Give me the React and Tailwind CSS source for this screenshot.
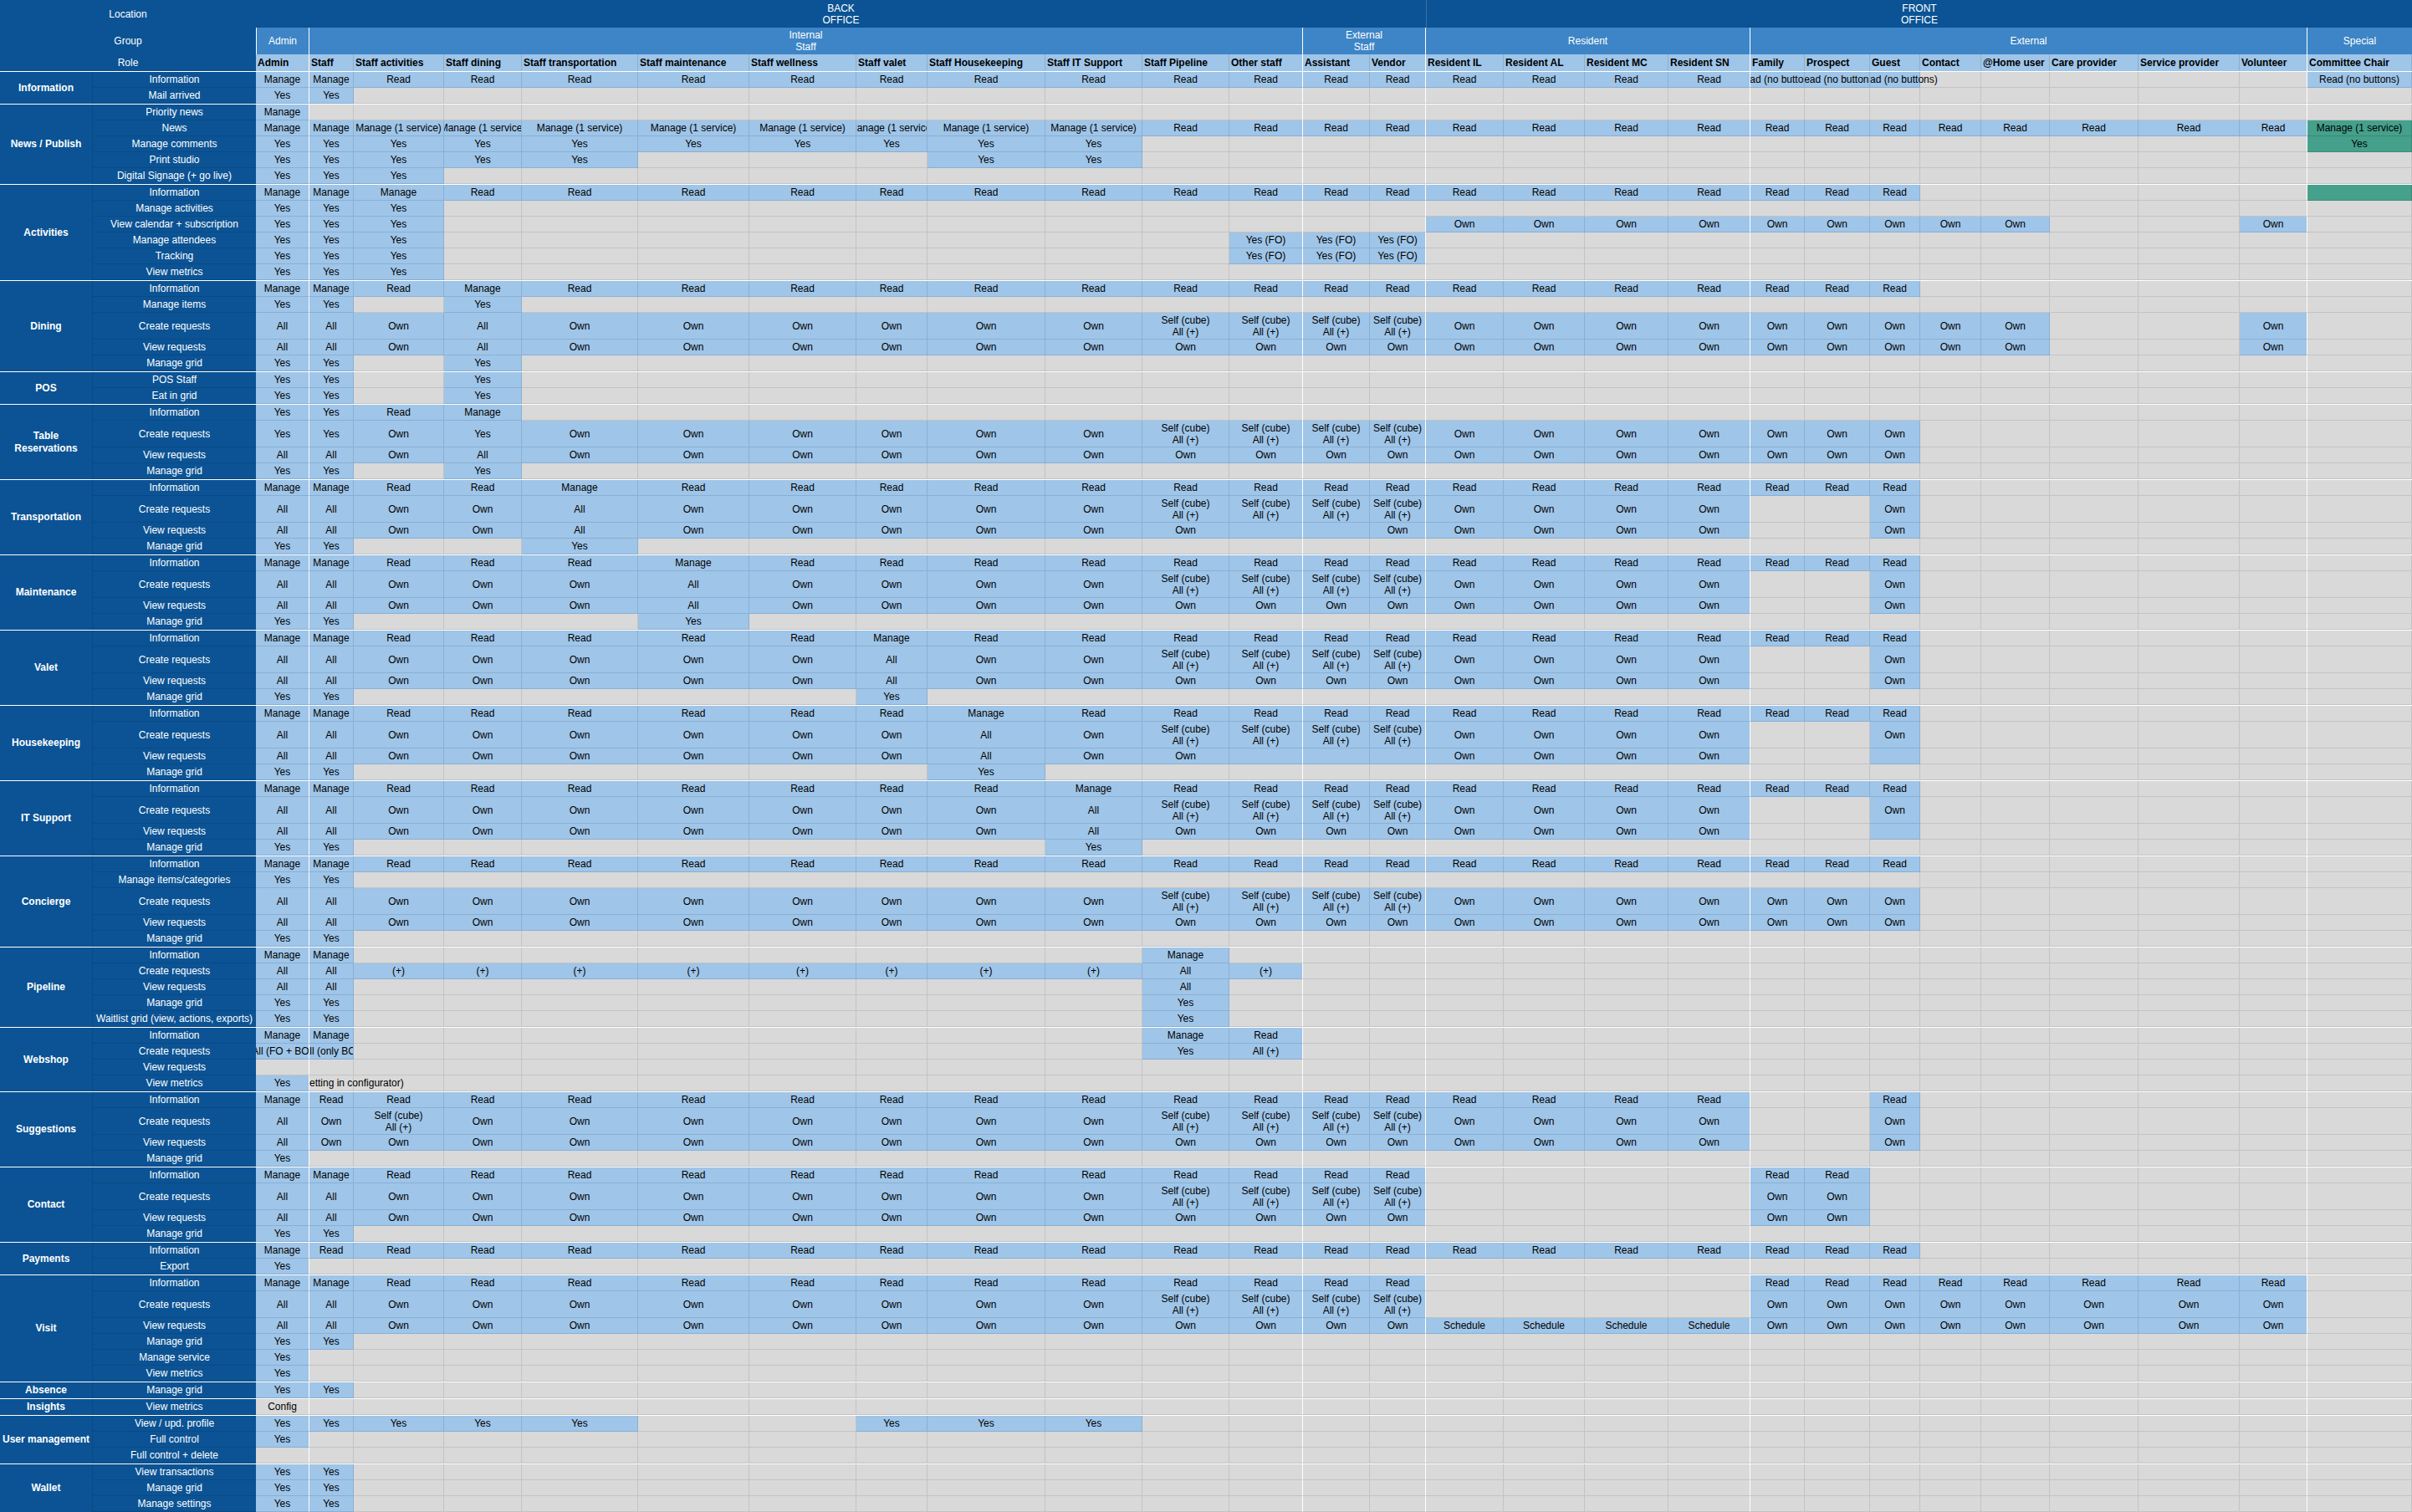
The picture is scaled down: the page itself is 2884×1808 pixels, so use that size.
import React from "react";

const W = ['w-[64px]','w-[53px]','w-[108px]','w-[93px]','w-[139px]','w-[133px]','w-[128px]','w-[85px]','w-[141px]','w-[116px]','w-[104px]','w-[88px]','w-[80px]','w-[67px]','w-[93px]','w-[97px]','w-[100px]','w-[98px]','w-[65px]','w-[78px]','w-[60px]','w-[73px]','w-[82px]','w-[106px]','w-[121px]','w-[81px]','w-[125px]'];
const BOUND = new Set([0, 11, 13, 17, 25]);
const ROLES = ['Admin','Staff','Staff activities','Staff dining','Staff transportation','Staff maintenance','Staff wellness','Staff valet','Staff Housekeeping','Staff IT Support','Staff Pipeline','Other staff','Assistant','Vendor','Resident IL','Resident AL','Resident MC','Resident SN','Family','Prospect','Guest','Contact','@Home user','Care provider','Service provider','Volunteer','Committee Chair'];

const rep = (v, n) => Array(n).fill(v);
const R = 'Read', O = 'Own', Y = 'Yes', M = 'Manage', A = 'All', S = 'Self (cube)\nAll (+)', M1 = 'Manage (1 service)', RNB = 'Read (no buttons)', FO = 'Yes (FO)';

const r = (label, cells, tall = false) => ({ label, cells, tall });

const SECTIONS = [
  ['Information', [
    r('Information', [M, M, ...rep(R, 16), RNB, RNB, 'OVR:ad (no buttons)', '', '', '', '', '', RNB]),
    r('Mail arrived', [Y, Y]),
  ]],
  ['News / Publish', [
    r('Priority news', [M]),
    r('News', [M, M, ...rep(M1, 8), ...rep(R, 16), 'T:Manage (1 service)']),
    r('Manage comments', [Y, Y, ...rep(Y, 8), ...rep('', 16), 'T:Yes']),
    r('Print studio', [Y, Y, Y, Y, Y, '', '', '', Y, Y]),
    r('Digital Signage (+ go live)', [Y, Y, Y]),
  ]],
  ['Activities', [
    r('Information', [M, M, M, ...rep(R, 15), R, R, R, '', '', '', '', '', 'T:']),
    r('Manage activities', [Y, Y, Y]),
    r('View calendar + subscription', [Y, Y, Y, ...rep('', 11), ...rep(O, 4), O, O, O, O, O, '', '', O]),
    r('Manage attendees', [Y, Y, Y, ...rep('', 8), FO, FO, FO]),
    r('Tracking', [Y, Y, Y, ...rep('', 8), FO, FO, FO]),
    r('View metrics', [Y, Y, Y]),
  ]],
  ['Dining', [
    r('Information', [M, M, R, M, ...rep(R, 14), R, R, R]),
    r('Manage items', [Y, Y, '', Y]),
    r('Create requests', [A, A, O, A, ...rep(O, 6), ...rep(S, 4), ...rep(O, 4), O, O, O, O, O, '', '', O], true),
    r('View requests', [A, A, O, A, ...rep(O, 14), O, O, O, O, O, '', '', O]),
    r('Manage grid', [Y, Y, '', Y]),
  ]],
  ['POS', [
    r('POS Staff', [Y, Y, '', Y]),
    r('Eat in grid', [Y, Y, '', Y]),
  ]],
  ['Table\nReservations', [
    r('Information', [Y, Y, R, M]),
    r('Create requests', [Y, Y, O, Y, ...rep(O, 6), ...rep(S, 4), ...rep(O, 4), O, O, O], true),
    r('View requests', [A, A, O, A, ...rep(O, 14), O, O, O]),
    r('Manage grid', [Y, Y, '', Y]),
  ]],
  ['Transportation', [
    r('Information', [M, M, R, R, M, ...rep(R, 13), R, R, R]),
    r('Create requests', [A, A, O, O, A, ...rep(O, 5), ...rep(S, 4), ...rep(O, 4), '', '', O], true),
    r('View requests', [A, A, O, O, A, ...rep(O, 5), O, '_', '_', O, ...rep(O, 4), '', '', O]),
    r('Manage grid', [Y, Y, '', '', Y]),
  ]],
  ['Maintenance', [
    r('Information', [M, M, R, R, R, M, ...rep(R, 12), R, R, R]),
    r('Create requests', [A, A, O, O, O, A, ...rep(O, 4), ...rep(S, 4), ...rep(O, 4), '', '', O], true),
    r('View requests', [A, A, O, O, O, A, ...rep(O, 12), '', '', O]),
    r('Manage grid', [Y, Y, '', '', '', Y]),
  ]],
  ['Valet', [
    r('Information', [M, M, R, R, R, R, R, M, ...rep(R, 10), R, R, R]),
    r('Create requests', [A, A, O, O, O, O, O, A, O, O, ...rep(S, 4), ...rep(O, 4), '', '', O], true),
    r('View requests', [A, A, O, O, O, O, O, A, ...rep(O, 10), '', '', O]),
    r('Manage grid', [Y, Y, '', '', '', '', '', Y]),
  ]],
  ['Housekeeping', [
    r('Information', [M, M, ...rep(R, 6), M, ...rep(R, 9), R, R, R]),
    r('Create requests', [A, A, ...rep(O, 6), A, O, ...rep(S, 4), ...rep(O, 4), '', '', O], true),
    r('View requests', [A, A, ...rep(O, 6), A, O, O, '_', '_', '_', ...rep(O, 4), '', '', '_']),
    r('Manage grid', [Y, Y, ...rep('', 6), Y]),
  ]],
  ['IT Support', [
    r('Information', [M, M, ...rep(R, 7), M, ...rep(R, 8), R, R, R]),
    r('Create requests', [A, A, ...rep(O, 7), A, ...rep(S, 4), ...rep(O, 4), '', '', O], true),
    r('View requests', [A, A, ...rep(O, 7), A, ...rep(O, 8), '', '', '_']),
    r('Manage grid', [Y, Y, ...rep('', 7), Y]),
  ]],
  ['Concierge', [
    r('Information', [M, M, ...rep(R, 16), R, R, R]),
    r('Manage items/categories', [Y, Y]),
    r('Create requests', [A, A, ...rep(O, 8), ...rep(S, 4), ...rep(O, 4), O, O, O], true),
    r('View requests', [A, A, ...rep(O, 16), O, O, O]),
    r('Manage grid', [Y, Y]),
  ]],
  ['Pipeline', [
    r('Information', [M, M, ...rep('', 8), M]),
    r('Create requests', [A, A, ...rep('(+)', 8), A, '(+)']),
    r('View requests', [A, A, ...rep('', 8), A]),
    r('Manage grid', [Y, Y, ...rep('', 8), Y]),
    r('Waitlist grid (view, actions, exports)', [Y, Y, ...rep('', 8), Y]),
  ]],
  ['Webshop', [
    r('Information', [M, M, ...rep('', 8), M, R]),
    r('Create requests', ['All (FO + BO)', 'All (only BO)', ...rep('', 8), Y, 'All (+)']),
    r('View requests', []),
    r('View metrics', [Y, 'OVF:etting in configurator)']),
  ]],
  ['Suggestions', [
    r('Information', [M, R, ...rep(R, 16), '', '', R]),
    r('Create requests', [A, O, S, ...rep(O, 7), ...rep(S, 4), ...rep(O, 4), '', '', O], true),
    r('View requests', [A, O, ...rep(O, 16), '', '', O]),
    r('Manage grid', [Y]),
  ]],
  ['Contact', [
    r('Information', [M, M, ...rep(R, 12), '', '', '', '', R, R]),
    r('Create requests', [A, A, ...rep(O, 8), ...rep(S, 4), '', '', '', '', O, O], true),
    r('View requests', [A, A, ...rep(O, 12), '', '', '', '', O, O]),
    r('Manage grid', [Y, Y]),
  ]],
  ['Payments', [
    r('Information', [M, R, ...rep(R, 16), R, R, R]),
    r('Export', [Y]),
  ]],
  ['Visit', [
    r('Information', [M, M, ...rep(R, 12), '', '', '', '', ...rep(R, 8)]),
    r('Create requests', [A, A, ...rep(O, 8), ...rep(S, 4), '', '', '', '', ...rep(O, 8)], true),
    r('View requests', [A, A, ...rep(O, 12), ...rep('Schedule', 4), ...rep(O, 8)]),
    r('Manage grid', [Y, Y]),
    r('Manage service', [Y]),
    r('View metrics', [Y]),
  ]],
  ['Absence', [r('Manage grid', [Y, Y])]],
  ['Insights', [r('View metrics', ['~Config'])]],
  ['User management', [
    r('View / upd. profile', [Y, Y, Y, Y, Y, '', '', Y, Y, Y]),
    r('Full control', [Y]),
    r('Full control + delete', []),
  ]],
  ['Wallet', [
    r('View transactions', [Y, Y]),
    r('Manage grid', [Y, Y]),
    r('Manage settings', [Y, Y]),
  ]],
];

function Cell({ v, i, tall }) {
  let bg = 'bg-[#d9d9d9] border-[#c3c3c3]';
  let text = v || '';
  let ovf = false;
  if (text.startsWith('T:')) { bg = 'bg-[#45a08c] border-[#3a8a78]'; text = text.slice(2); }
  else if (text.startsWith('~')) { text = text.slice(1); }
  else if (text.startsWith('OVF:')) { text = text.slice(4); ovf = true; }
  else if (text.startsWith('OVR:')) { text = text.slice(4); ovf = true; bg = 'bg-[#9fc5e8] border-[#89afd4]'; }
  else if (text === '_') { bg = 'bg-[#9fc5e8] border-[#89afd4]'; text = ''; }
  else if (text) { bg = 'bg-[#9fc5e8] border-[#89afd4]'; }
  const right = BOUND.has(i) ? 'border-r-white' : '';
  if (ovf) {
    return (
      <div className={`${W[i]} shrink-0 relative ${bg} border-r border-b ${right}`}>
        <span className="absolute left-0 top-0 h-full flex items-center whitespace-nowrap z-10">{text}</span>
      </div>
    );
  }
  return (
    <div className={`${W[i]} shrink-0 flex items-center justify-center overflow-hidden border-r border-b ${bg} ${right}`}>
      <span className={`whitespace-pre text-center ${tall ? 'leading-[14px]' : 'leading-none'}`}>{text}</span>
    </div>
  );
}

function Row({ row }) {
  return (
    <div className={`flex ${row.tall ? 'h-[32px]' : 'h-[19px]'}`}>
      <div className="w-[195px] shrink-0 flex items-center justify-center text-white bg-[#0b5394] border-b border-[#094a85] whitespace-nowrap overflow-hidden">
        {row.label}
      </div>
      {ROLES.map((_, i) => <Cell key={i} v={row.cells[i]} i={i} tall={row.tall} />)}
    </div>
  );
}

export default function App() {
  return (
    <div className="w-[2884px] h-[1808px] bg-[#d9d9d9] text-[12px] text-black overflow-hidden" style={{ fontFamily: '"Liberation Sans", Arial, sans-serif' }}>
      <div className="flex h-[33px] bg-[#0b5394] text-white">
        <div className="w-[306px] shrink-0 flex items-center justify-center">Location</div>
        <div className="w-[1399px] shrink-0 flex items-center justify-center text-center leading-[14px]">BACK<br />OFFICE</div>
        <div className="w-[1179px] shrink-0 flex items-center justify-center text-center leading-[14px] border-l border-[#3a6fa8]">FRONT<br />OFFICE</div>
      </div>
      <div className="flex h-[32px] text-white">
        <div className="w-[306px] shrink-0 flex items-center justify-center bg-[#0b5394]">Group</div>
        <div className="w-[64px] shrink-0 flex items-center justify-center bg-[#3d85c6] border-l border-r border-white">Admin</div>
        <div className="w-[1188px] shrink-0 flex items-center justify-center bg-[#3d85c6] border-r border-white text-center leading-[14px]">Internal<br />Staff</div>
        <div className="w-[147px] shrink-0 flex items-center justify-center bg-[#3d85c6] border-r border-white text-center leading-[14px]">External<br />Staff</div>
        <div className="w-[388px] shrink-0 flex items-center justify-center bg-[#3d85c6] border-r border-white">Resident</div>
        <div className="w-[666px] shrink-0 flex items-center justify-center bg-[#3d85c6] border-r border-white">External</div>
        <div className="w-[125px] shrink-0 flex items-center justify-center bg-[#3d85c6]">Special</div>
      </div>
      <div className="flex h-[21px] border-b border-white">
        <div className="w-[306px] shrink-0 flex items-center justify-center bg-[#0b5394] text-white">Role</div>
        {ROLES.map((role, i) => (
          <div key={i} className={`${W[i]} shrink-0 flex items-center pl-[2px] font-bold bg-[#9fc5e8] border-r whitespace-nowrap overflow-hidden ${BOUND.has(i) ? 'border-white' : 'border-[#89afd4]'}`}>
            {role}
          </div>
        ))}
      </div>
      {SECTIONS.map(([name, rows], si) => (
        <div key={si} className={`flex ${si > 0 ? 'border-t border-white' : ''}`}>
          <div className="w-[111px] shrink-0 flex items-center justify-center text-center font-bold text-white bg-[#0b5394] border-r border-[#094a85] whitespace-pre leading-[15px]">
            {name}
          </div>
          <div className="flex flex-col">
            {rows.map((row, ri) => <Row key={ri} row={row} />)}
          </div>
        </div>
      ))}
    </div>
  );
}
